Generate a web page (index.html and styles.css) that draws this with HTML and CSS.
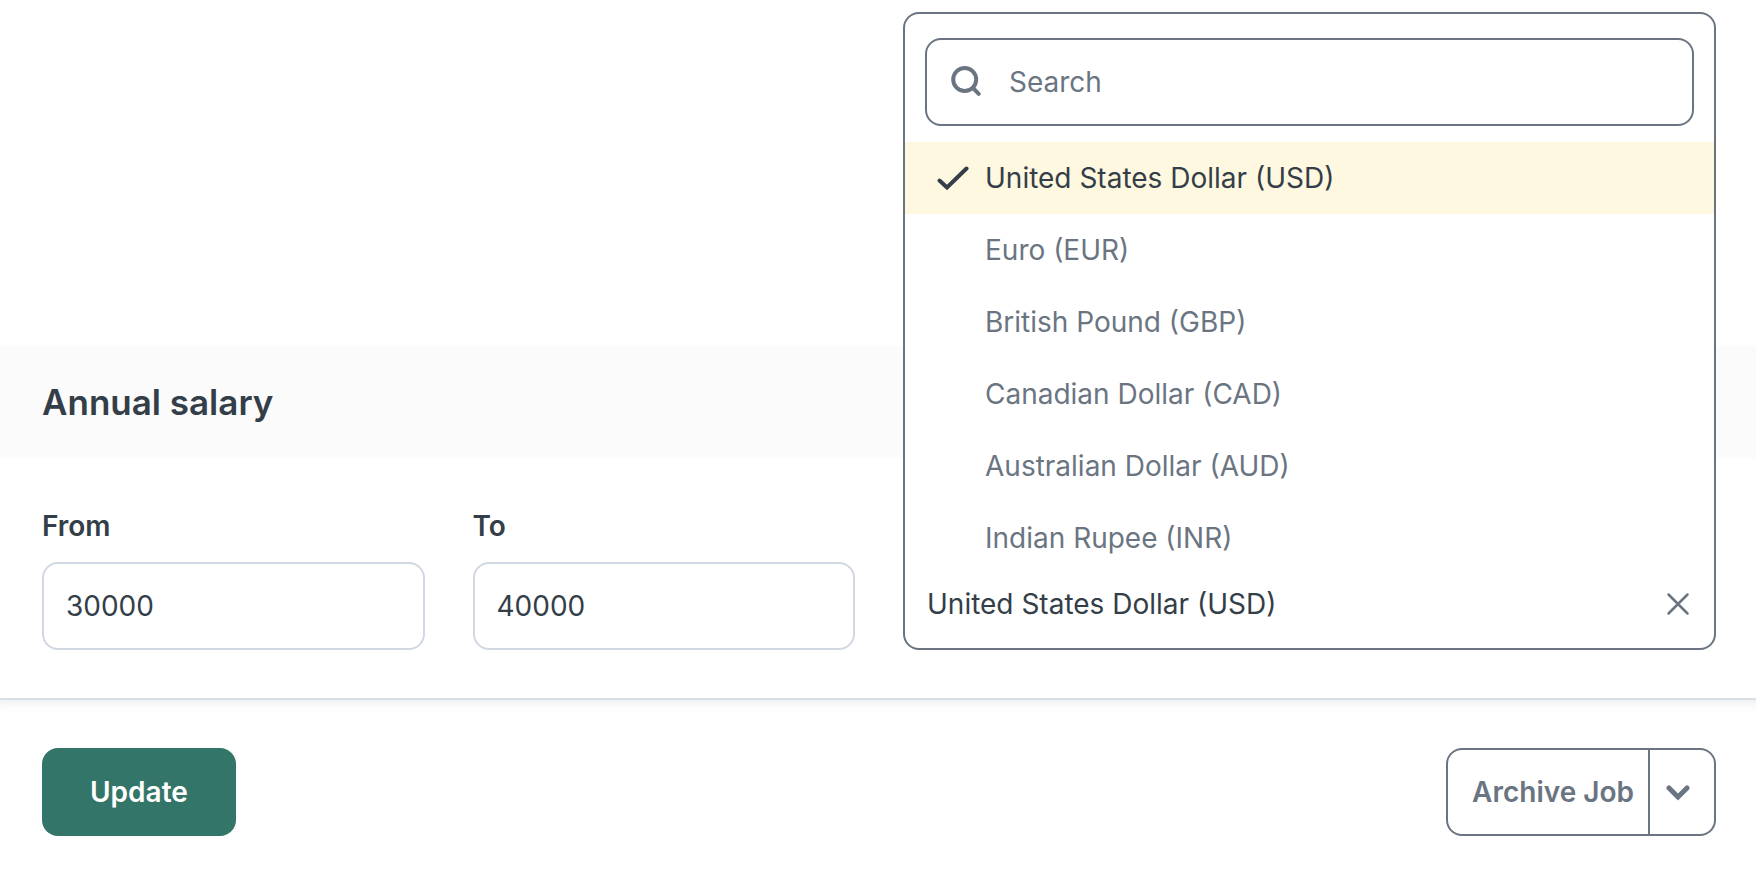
FILE: index.html
```html
<!DOCTYPE html>
<html lang="en">
    <head>
        <title>Edit Job</title>
        <meta charset="utf-8">
        <meta name="viewport" content="width=device-width, initial-scale=1">
        <link rel="stylesheet" href="styles.css">
    </head>
    <body>
        <form class="job-form">
            <section class="salary">
                <header class="section-header">
                    <h2>Annual salary</h2>
                </header>
                <div class="fields">
                    <div class="field">
                        <label for="from">From</label>
                        <input type="text" id="from" class="text" value="30000">
                    </div>
                    <div class="field">
                        <label for="to">To</label>
                        <input type="text" id="to" class="text" value="40000">
                    </div>
                    <div class="field currency">
                        <!-- opens upwards, over the section header -->
                        <div class="dropdown">
                            <div class="search">
                                <svg class="icon" width="32" height="32" viewBox="0 0 32 32"><circle cx="15.700" cy="13.500" r="11.500"/><path d="M24 22L29.700 27.900"/></svg>
                                <input type="text" class="search-input" placeholder="Search" aria-label="Search">
                            </div>
                            <div class="options" role="listbox" aria-label="Currency">
                                <button type="button" class="option selected" role="option" aria-selected="true">
                                    <svg class="icon check" width="32" height="32" viewBox="0 0 32 32"><path d="M2.500 18.500L10 25.500L29.500 6.500"/></svg>
                                    United States Dollar (USD)
                                </button>
                                <button type="button" class="option" role="option">Euro (EUR)</button>
                                <button type="button" class="option" role="option">British Pound (GBP)</button>
                                <button type="button" class="option" role="option">Canadian Dollar (CAD)</button>
                                <button type="button" class="option" role="option">Australian Dollar (AUD)</button>
                                <button type="button" class="option" role="option">Indian Rupee (INR)</button>
                            </div>
                            <div class="current">
                                <span>United States Dollar (USD)</span>
                                <button type="button" class="clear" aria-label="Clear">
                                    <svg class="icon thin" width="24" height="24" viewBox="0 0 24 24"><path d="M2.500 2.500L21.500 21.500M21.500 2.500L2.500 21.500"/></svg>
                                </button>
                            </div>
                        </div>
                    </div>
                </div>
            </section>
            <footer class="actions">
                <button type="submit" class="button primary">Update</button>
                <div class="split">
                    <button type="button" class="button archive">Archive Job</button>
                    <button type="button" class="button more" aria-label="More actions">
                        <svg class="icon chevron" width="24" height="24" viewBox="0 0 24 24"><path d="M3 8L12 17L21 8"/></svg>
                    </button>
                </div>
            </footer>
        </form>
    </body>
</html>
```
FILE: styles.css
```css
*{
    box-sizing: border-box;
}
body{
    margin: 0;
    background-color: #fff;
    color: #343e48;
    font-family: Inter, "Liberation Sans", sans-serif;
    font-size: 28px;
    line-height: 40px;
}
button, input{
    font: inherit;
    color: inherit;
}
button{
    padding: 0;
    background: none;
    border: none;
    cursor: pointer;
}
.icon{
    flex: none;
    fill: none;
    stroke: #6b7582;
    stroke-width: 4;
    stroke-linecap: round;
}
.job-form{
    padding-top: 346px;
}
.section-header{
    padding: 32px 42px;
    background-color: #fbfbfb;
}
h2{
    margin: 0;
    font-size: 35px;
    font-weight: 600;
    line-height: 48px;
}
.fields{
    display: grid;
    grid-template-columns: repeat(4, 1fr);
    gap: 48px;
    padding: 48px 40px 48px 42px;
}
.field{
    display: flex;
    flex-direction: column;
    gap: 16px;
}
.field label{
    font-weight: 600;
}
.text{
    width: 100%;
    height: 88px;
    padding: 0 22px;
    background-color: #fff;
    border: solid #d1d7e3 2px;
    border-radius: 16px;
}
.currency{
    position: relative;
    grid-column: span 2;
}
.dropdown{
    position: absolute;
    left: 0;
    right: 0;
    bottom: 0;
    padding: 24px 0 14px;
    background-color: #fff;
    border: solid #6b7582 2px;
    border-radius: 16px;
}
.search{
    display: flex;
    align-items: center;
    gap: 28px;
    height: 88px;
    margin: 0 20px 16px;
    padding: 0 22px;
    border: solid #6b7582 2px;
    border-radius: 16px;
}
.search-input{
    flex: 1;
    min-width: 0;
    padding: 0;
    background: none;
    border: none;
    outline: none;
}
.search-input::placeholder{
    color: #6b7582;
    opacity: 1;
}
.option{
    display: flex;
    align-items: center;
    gap: 16px;
    width: 100%;
    height: 72px;
    padding-left: 80px;
    color: #6b7582;
    text-align: left;
}
.option.selected{
    padding-left: 32px;
    background-color: #fff8e1;
    color: #343e48;
}
.icon.check{
    stroke: #343e48;
}
.current{
    display: flex;
    align-items: center;
    justify-content: space-between;
    height: 60px;
    padding: 0 24px 0 22px;
}
.clear{
    display: flex;
}
.icon.thin{
    stroke-width: 2.5;
}
.actions{
    display: flex;
    align-items: center;
    justify-content: space-between;
    padding: 48px 40px 43px 42px;
    border-top: solid #d8dfe6 2px;
    box-shadow: inset 0 12px 12px -10px #e8eaea;
}
.button{
    height: 88px;
    font-weight: 600;
}
.primary{
    padding: 0 48px;
    background-color: #34756a;
    border-radius: 16px;
    color: #fff;
}
.split{
    display: flex;
    height: 88px;
    border: solid #6b7582 2px;
    border-radius: 16px;
    color: #6b7582;
}
.split .button{
    height: 100%;
}
.archive{
    padding: 0 14px 0 24px;
}
.more{
    display: flex;
    align-items: center;
    padding: 0 24px 0 16px;
    border-left: solid #6b7582 2px;
}
.icon.chevron{
    stroke-width: 5;
}
```
